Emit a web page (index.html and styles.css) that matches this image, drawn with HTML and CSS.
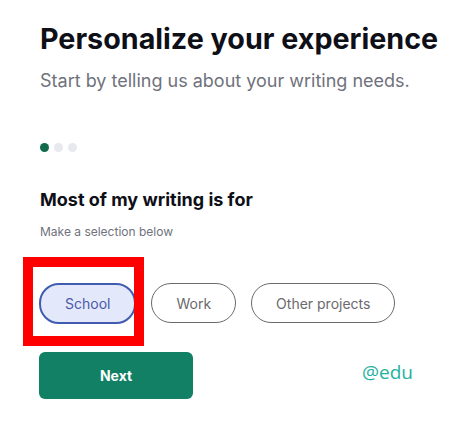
FILE: index.html
```html
<!DOCTYPE html>
<html lang="en">
<head>
    <meta charset="UTF-8">
    <title>Personalize your experience</title>
    <meta name="viewport" content="width=device-width, initial-scale=1.0">
    <link rel="stylesheet" href="styles.css">
</head>
<body>

<div class="onboarding">
    <h1>Personalize your experience</h1>
    <p class="subtitle">Start by telling us about your writing needs.</p>

    <div class="steps">
        <span class="dot active"></span>
        <span class="dot"></span>
        <span class="dot"></span>
    </div>

    <h2>Most of my writing is for</h2>
    <p class="hint">Make a selection below</p>

    <div class="choices">
        <button type="button" class="choice selected">School</button>
        <button type="button" class="choice">Work</button>
        <button type="button" class="choice">Other projects</button>
        <!-- annotation frame around the selected choice -->
        <span class="highlight"></span>
    </div>

    <div class="actions">
        <button type="button" class="next-btn">Next</button>
        <span class="tag">@edu</span>
    </div>
</div>

</body>
</html>
```

FILE: styles.css
```css
body {
    font-family: Inter, "Noto Sans", Arial, sans-serif;
    background-color: #ffffff;
    color: #0e0f17;
    margin: 0;
    padding: 0;
}

.onboarding {
    padding: 21px 0 0 40px;
}

h1 {
    font-size: 28.7px;
    line-height: 35px;
    font-weight: 700;
    margin: 0;
}

.subtitle {
    font-size: 18px;
    line-height: 24px;
    color: #6f727c;
    margin: 13px 0 0;
}

.steps {
    display: flex;
    gap: 5px;
    margin-top: 50px;
}

.dot {
    width: 9px;
    height: 9px;
    border-radius: 50%;
    background-color: #e8e9ee;
}

.dot.active {
    background-color: #116a4c;
}

h2 {
    font-size: 18px;
    line-height: 24px;
    font-weight: 700;
    margin: 36px 0 0;
}

.hint {
    font-size: 12px;
    line-height: 16px;
    color: #6f727c;
    margin: 12px 0 0;
}

.choices {
    position: relative;
    display: flex;
    gap: 15px;
    margin-top: 43px;
    margin-left: -1px;
}

.choice {
    font-family: inherit;
    font-size: 14px;
    color: #6a6a6e;
    background-color: #ffffff;
    border: 1px solid #6a6a6e;
    border-radius: 20px;
    height: 40px;
    padding: 0 24px;
}

.choice.selected {
    color: #4a5aa9;
    background-color: #e4e8fb;
    border: 2px solid #3f5cb0;
    height: 41px;
    padding: 0 24px;
}

.highlight {
    position: absolute;
    left: -16px;
    top: -26px;
    width: 101px;
    height: 69px;
    border: 10px solid #ff0000;
}

.actions {
    display: flex;
    align-items: center;
    gap: 169px;
    margin-top: 28px;
    margin-left: -1px;
}

.next-btn {
    font-family: inherit;
    font-size: 14px;
    font-weight: 700;
    color: #ffffff;
    background-color: #128065;
    border: none;
    border-radius: 6px;
    width: 154px;
    height: 47px;
}

.tag {
    font-family: "Open Sans", sans-serif;
    font-size: 19px;
    color: #1fb2a0;
    margin-top: -8px;
}
```
